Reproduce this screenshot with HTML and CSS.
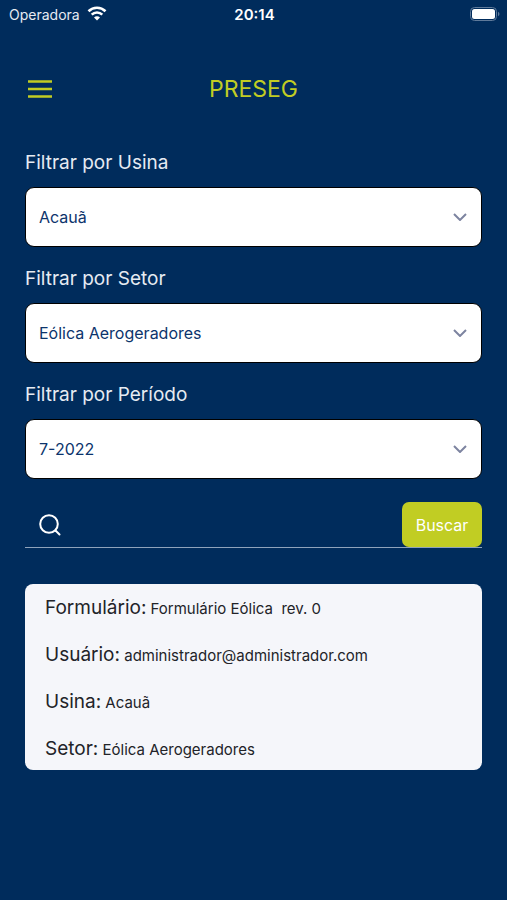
FILE: index.html
```html
<!DOCTYPE html>
<html lang="pt-BR">
<head>
  <meta charset="UTF-8">
  <meta name="viewport" content="width=device-width, initial-scale=1.0">
  <title>PRESEG</title>
  <link rel="stylesheet" href="styles.css">
</head>
<body>
  <div class="status-bar">
    <div class="carrier">
      <span>Operadora</span>
      <svg class="wifi" viewBox="0 0 20 15" width="20" height="15" fill="none" stroke="#fff" stroke-width="2.6">
        <path d="M1.500 5.200a12.200 12.200 0 0 1 17 0"/>
        <path d="M4.700 8.600a7.600 7.600 0 0 1 10.600 0"/>
        <path d="M10 14.500l-3-3a4.200 4.200 0 0 1 6 0z" fill="#fff" stroke="none"/>
      </svg>
    </div>
    <span class="clock">20:14</span>
    <div class="battery">
      <svg viewBox="0 0 30 14" width="30" height="14">
        <rect x="0.5" y="0.5" width="26" height="13" rx="4" fill="none" stroke="#5f7a9a"/>
        <rect x="2" y="2" width="23" height="10" rx="2.5" fill="#fff"/>
        <path d="M28 4.800c2 .8 2 3.600 0 4.400z" fill="#5f7a9a"/>
      </svg>
    </div>
  </div>

  <header class="header">
    <button class="menu-btn" type="button" aria-label="Menu">
      <svg viewBox="0 0 26 20" width="26" height="20" stroke="#c1cd23" stroke-width="2.500">
        <path d="M1 2.500h24M1 10h24M1 17.500h24"/>
      </svg>
    </button>
    <h1>PRESEG</h1>
  </header>

  <main class="content">
    <form class="filters">
      <label for="usina">Filtrar por Usina</label>
      <div class="select-box">
        <select id="usina" name="usina">
          <option>Acauã</option>
        </select>
        <svg class="chevron" viewBox="0 0 14 8" width="14" height="8"><path d="M1 1l6 6 6-6"/></svg>
      </div>

      <label for="setor">Filtrar por Setor</label>
      <div class="select-box">
        <select id="setor" name="setor">
          <option>Eólica Aerogeradores</option>
        </select>
        <svg class="chevron" viewBox="0 0 14 8" width="14" height="8"><path d="M1 1l6 6 6-6"/></svg>
      </div>

      <label for="periodo">Filtrar por Período</label>
      <div class="select-box">
        <select id="periodo" name="periodo">
          <option>7-2022</option>
        </select>
        <svg class="chevron" viewBox="0 0 14 8" width="14" height="8"><path d="M1 1l6 6 6-6"/></svg>
      </div>

      <div class="search">
        <svg viewBox="0 0 22 22" width="22" height="22" fill="none" stroke="#fff" stroke-width="2" stroke-linecap="round">
          <circle cx="10" cy="10" r="8.800"/>
          <path d="M16.500 16.500l4 4"/>
        </svg>
        <input type="search" name="busca" aria-label="Buscar formulário">
        <button type="submit">Buscar</button>
      </div>
    </form>

    <article class="card">
      <p><strong>Formulário:</strong> Formulário Eólica&nbsp; rev. 0</p>
      <p><strong>Usuário:</strong> administrador@administrador.com</p>
      <p><strong>Usina:</strong> Acauã</p>
      <p><strong>Setor:</strong> Eólica Aerogeradores</p>
    </article>
  </main>
</body>
</html>
```
FILE: styles.css
```css
* {
  box-sizing: border-box;
}
body {
  margin: 0;
  min-height: 100vh;
  background-color: #002c5c;
  color: #fff;
  font-family: Inter, "Liberation Sans", sans-serif;
}
.status-bar {
  display: grid;
  grid-template-columns: 1fr auto 1fr;
  align-items: center;
  height: 28px;
  padding: 0 7px 0 9px;
  font-size: 14px;
}
.carrier {
  display: flex;
  align-items: center;
  gap: 7px;
  color: #e6ebf2;
}
.wifi {
  margin-bottom: 2px;
}
.clock {
  font-size: 15px;
  font-weight: 600;
}
.battery {
  display: flex;
  justify-content: flex-end;
}
.header {
  display: grid;
  grid-template-columns: 1fr auto 1fr;
  align-items: center;
  height: 123px;
  padding: 0 25px 2px;
}
.header h1 {
  margin: 0;
  color: #c1cd23;
  font-size: 23px;
  font-weight: 400;
}
.menu-btn {
  justify-self: start;
  display: flex;
  padding: 2px;
  border: none;
  background: none;
  cursor: pointer;
}
.content {
  padding: 0 25px;
}
.filters label {
  display: block;
  margin-bottom: 12px;
  color: #e6ebf2;
  font-size: 19px;
  line-height: 24px;
}
.select-box {
  display: grid;
  align-items: center;
  margin-bottom: 20px;
}
.select-box select,
.chevron {
  grid-area: 1 / 1;
}
.select-box select {
  width: 100%;
  height: 60px;
  padding: 0 40px 0 13px;
  border: 1px solid #000;
  border-radius: 9px;
  background-color: #fff;
  color: #0c346c;
  font-family: inherit;
  font-size: 16px;
  appearance: none;
}
.chevron {
  justify-self: end;
  margin-right: 15px;
  fill: none;
  stroke: #7d84a0;
  stroke-width: 2;
  pointer-events: none;
}
.search {
  display: flex;
  align-items: center;
  margin-top: 23px;
  padding-left: 14px;
  border-bottom: 1px solid #8fa3bb;
}
.search input {
  flex: 1;
  min-width: 0;
  height: 45px;
  padding: 0 12px;
  border: none;
  outline: none;
  background: none;
  color: #fff;
  font-family: inherit;
  font-size: 16px;
}
.search button {
  width: 80px;
  height: 45px;
  padding: 0;
  border: none;
  border-radius: 7px;
  background-color: #c1cd23;
  color: #fff;
  font-family: inherit;
  font-size: 16px;
  cursor: pointer;
}
.card {
  display: flex;
  flex-direction: column;
  gap: 22px;
  margin-top: 36px;
  padding: 12px 20px 8px;
  border-radius: 8px;
  background-color: #f5f6fa;
  color: #222328;
  font-size: 15px;
}
.card p {
  margin: 0;
  line-height: 24px;
}
.card strong {
  font-size: 19px;
  font-weight: 400;
}
```
